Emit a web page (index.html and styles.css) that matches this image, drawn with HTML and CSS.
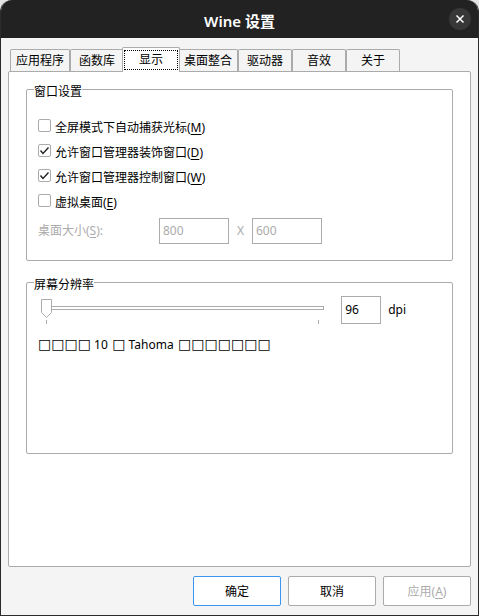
FILE: index.html
```html
<!DOCTYPE html>
<html lang="zh-CN">
<head>
    <meta charset="UTF-8">
    <meta name="viewport" content="width=device-width, initial-scale=1.0">
    <title>Wine 设置</title>
    <link rel="stylesheet" href="styles.css">
</head>
<body>
    <div class="window">
        <header class="titlebar">
            <h1 class="title">Wine 设置</h1>
            <button type="button" class="close" aria-label="关闭">
                <svg width="10" height="10" viewBox="0 0 10 10"><path d="M1.500 1.500l7 7M8.500 1.500l-7 7" stroke="#fff" stroke-width="1.500" fill="none"/></svg>
            </button>
        </header>

        <main class="content">
            <div class="tabs" role="tablist">
                <button type="button" class="tab" role="tab">应用程序</button>
                <button type="button" class="tab" role="tab">函数库</button>
                <button type="button" class="tab active" role="tab" aria-selected="true"><span class="focus">显示</span></button>
                <button type="button" class="tab" role="tab">桌面整合</button>
                <button type="button" class="tab" role="tab">驱动器</button>
                <button type="button" class="tab" role="tab">音效</button>
                <button type="button" class="tab" role="tab">关于</button>
            </div>

            <div class="panel">
                <div class="groups">
                    <fieldset class="group">
                        <legend>窗口设置</legend>
                        <div class="options">
                            <label class="option"><input type="checkbox" class="check"><span>全屏模式下自动捕获光标(<u>M</u>)</span></label>
                            <label class="option"><input type="checkbox" class="check" checked><span>允许窗口管理器装饰窗口(<u>D</u>)</span></label>
                            <label class="option"><input type="checkbox" class="check" checked><span>允许窗口管理器控制窗口(<u>W</u>)</span></label>
                            <label class="option"><input type="checkbox" class="check"><span>虚拟桌面(<u>E</u>)</span></label>
                        </div>
                        <div class="size-row">
                            <label class="size-label" for="desk-width">桌面大小(<u>S</u>):</label>
                            <input type="text" class="field" id="desk-width" value="800" disabled>
                            <label class="times" for="desk-height">X</label>
                            <input type="text" class="field" id="desk-height" value="600" disabled>
                        </div>
                    </fieldset>

                    <fieldset class="group">
                        <legend>屏幕分辨率</legend>
                        <div class="dpi-row">
                            <div class="slider">
                                <input type="range" class="range" min="96" max="480" value="96" aria-label="屏幕分辨率">
                                <div class="ticks"><i></i><i></i></div>
                            </div>
                            <input type="text" class="field dpi" id="dpi" value="96">
                            <label for="dpi">dpi</label>
                        </div>
                        <p class="sample"><span class="box">□□□□</span> 10<span class="box"> □</span> Tahoma<span class="box"> □□□□□□□</span></p>
                    </fieldset>
                </div>
            </div>

            <div class="buttons">
                <button type="button" class="btn default">确定</button>
                <button type="button" class="btn">取消</button>
                <button type="button" class="btn" disabled>应用(<u>A</u>)</button>
            </div>
        </main>
    </div>
</body>
</html>
```

FILE: styles.css
```css
* {
    box-sizing: border-box;
}
html {
    background-color: #e4e4e4;
}
body {
    margin: 0;
    font-family: "Noto Sans", "Noto Sans CJK SC", sans-serif;
    font-size: 12px;
    line-height: 16px;
    color: #000;
}
button, input {
    font: inherit;
    color: inherit;
}
u {
    text-underline-offset: 2px;
}

/* Window frame */
.window {
    display: flex;
    flex-direction: column;
    min-height: 100vh;
    border: 1px solid #2b2b2e;
    border-top: 0;
    border-radius: 12px 12px 0 0;
    background-color: #f4f4f4;
    overflow: hidden;
}
.titlebar {
    display: grid;
    grid-template-columns: 1fr auto 1fr;
    align-items: center;
    height: 38px;
    padding: 0 7px;
    background-color: #222;
    color: #fff;
}
.title {
    grid-column: 2;
    margin: 0;
    padding-top: 3px;
    font-size: 15px;
    line-height: 20px;
    font-weight: 600;
}
.close {
    display: flex;
    align-items: center;
    justify-content: center;
    justify-self: end;
    width: 22px;
    height: 22px;
    padding: 0;
    border: 0;
    border-radius: 50%;
    background-color: #383838;
}
.content {
    display: flex;
    flex-direction: column;
    flex: 1;
    padding: 9px 7px;
}

/* Tabs */
.tabs {
    display: flex;
    align-items: flex-end;
    padding-left: 2px;
}
.tab {
    min-width: 54px;
    height: 22px;
    padding: 0 5px;
    border: 1px solid #ababab;
    border-bottom: 0;
    border-radius: 2px 2px 0 0;
    background-color: #f4f4f4;
    white-space: nowrap;
}
.tab.active {
    position: relative;
    height: 25px;
    min-width: 58px;
    margin: 0 -2px -1px;
    padding: 2px 1px;
    background-color: #fff;
}
.focus {
    display: block;
    padding: 1px 0;
    border: 1px dotted #000;
}
.panel {
    flex: 1;
    padding: 9px 17px 16px;
    border: 1px solid #ababab;
    border-radius: 2px;
    background-color: #fff;
}

/* Group boxes */
.groups {
    display: grid;
    grid-auto-rows: 1fr;
    gap: 13px;
}
.group {
    min-width: 0;
    margin: 0;
    padding: 0 11px 16px;
    border: 1px solid #ababab;
    border-radius: 2px;
}
.group legend {
    margin-left: -4px;
    padding: 5px 0 0;
    line-height: 12px;
}
.options {
    padding-top: 17px;
}
.option {
    display: flex;
    align-items: center;
    gap: 4px;
    height: 25px;
}
.check {
    appearance: none;
    width: 13px;
    height: 13px;
    margin: 0 0 4px;
    border: 1px solid #ababab;
    border-radius: 2px;
    background: #fff center no-repeat;
}
.check:checked {
    background-image: url("data:image/svg+xml,%3Csvg xmlns='http://www.w3.org/2000/svg' width='11' height='11'%3E%3Cpath d='M1.5 5.5l2.5 3 5.500-6' fill='none' stroke='%23222' stroke-width='1.4'/%3E%3C/svg%3E");
}
.size-row {
    display: flex;
    align-items: center;
    padding-top: 3px;
    color: #ababab;
}
.size-label {
    width: 121px;
}
.times {
    width: 23px;
    text-align: center;
}
.field {
    width: 70px;
    height: 26px;
    padding: 0 3px 2px;
    border: 1px solid #ababab;
    border-radius: 0;
    background-color: #fff;
}
.field:disabled {
    color: #ababab;
}

/* Resolution slider */
.dpi-row {
    display: flex;
    align-items: center;
    padding: 5px 35px 0 3px;
}
.slider {
    flex: 1;
    padding-top: 2px;
}
.range {
    display: block;
    appearance: none;
    width: 100%;
    height: 19px;
    margin: 0;
    background: none;
}
.range::-webkit-slider-runnable-track {
    height: 4px;
    border: 1px solid #ababab;
}
.range::-webkit-slider-thumb {
    appearance: none;
    width: 11px;
    height: 19px;
    margin: -8px 0 0 -1px;
    background: url("data:image/svg+xml,%3Csvg xmlns='http://www.w3.org/2000/svg' width='11' height='19'%3E%3Cpath d='M.5 .5h10v13l-5 5-5-5z' fill='%23fff' stroke='%23ababab'/%3E%3C/svg%3E") no-repeat;
}
.ticks {
    display: flex;
    justify-content: space-between;
    padding: 3px 5px 0;
}
.ticks i {
    width: 1px;
    height: 4px;
    background-color: #ababab;
}
.dpi {
    width: 40px;
    height: 28px;
    margin: 0 7px 0 17px;
}
.sample {
    margin: 12px 0 0;
    white-space: nowrap;
}
.box {
    font-family: "DejaVu Sans", sans-serif;
    font-size: 14px;
}

/* Bottom buttons */
.buttons {
    display: flex;
    justify-content: flex-end;
    gap: 7px;
    padding-top: 9px;
}
.btn {
    width: 88px;
    height: 30px;
    padding: 2px 0 0;
    border: 1px solid #ababab;
    border-radius: 2px;
    background-color: #fff;
}
.btn.default {
    border-color: #3a96f0;
}
.btn:disabled {
    color: #ababab;
}
```
